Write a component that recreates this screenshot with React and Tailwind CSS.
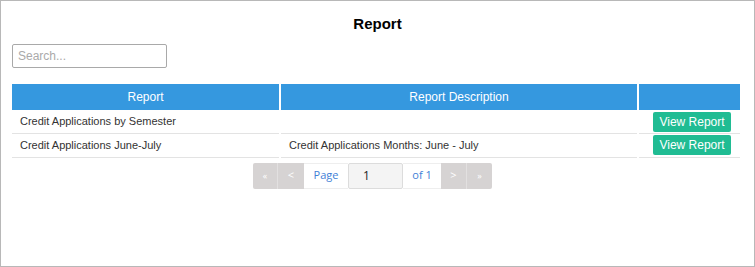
import React from "react";

const rows = [
  { name: "Credit Applications by Semester", desc: "" },
  { name: "Credit Applications June-July", desc: "Credit Applications Months: June - July" },
];

export default function App() {
  return (
    <div className="w-[755px] h-[267px] border border-[#b8b8b8] bg-white font-['Liberation_Sans',Arial,sans-serif] text-[#333]">
      {/* Title */}
      <h1 className="pt-[14px] h-[42px] text-center text-[15px] font-bold text-black leading-[17px]">
        Report
      </h1>

      {/* Search */}
      <div className="pl-[11px]">
        <input
          type="text"
          placeholder="Search..."
          className="w-[155px] h-[24px] border border-[#a9a9a9] rounded-[2px] px-[5px] text-[12px] placeholder:text-[#aaa] outline-none"
        />
      </div>

      {/* Table */}
      <table className="ml-[11px] mt-[16px] w-[728px] border-collapse text-[11px]">
        <thead>
          <tr className="h-[26px] bg-[#3598df] text-white text-[12px]">
            <th className="w-[268px] font-normal">Report</th>
            <th className="w-[358px] font-normal border-l-2 border-white">Report Description</th>
            <th className="font-normal border-l-2 border-white"></th>
          </tr>
        </thead>
        <tbody>
          {rows.map((r, i) => (
            <tr key={i} className="h-[23.5px]">
              <td className="pl-[8px] border-b border-[#e3e3e3]">{r.name}</td>
              <td className="pl-[8px] border-b border-l-2 border-b-[#e3e3e3] border-l-white">{r.desc}</td>
              <td className="border-b border-l-2 border-b-[#e3e3e3] border-l-white text-right pr-[9px]">
                <button className="w-[78px] h-[20px] bg-[#20bc93] text-white text-[12px] rounded-[2px] align-middle">
                  View Report
                </button>
              </td>
            </tr>
          ))}
        </tbody>
      </table>

      {/* Pagination */}
      <div className="flex justify-center mt-[5px] pr-[10px]">
        <div className="flex h-[26px] text-[11px] font-['Open_Sans',sans-serif]">
          <button className="w-[25px] bg-[#d6d3d3] text-white border-r border-[#e2e0e0] rounded-l-[2px] text-[9px]">«</button>
          <button className="w-[26px] bg-[#d6d3d3] text-white">&lt;</button>
          <span className="w-[44px] flex items-center justify-center text-[#3f7fd6] bg-white border-y border-[#eee]">Page</span>
          <div className="w-[55px] bg-[#f4f4f4] border border-[#dcdcdc] rounded-[2px] flex items-center pl-[14px] text-[12px] text-[#222]">1</div>
          <span className="w-[38px] flex items-center justify-center text-[#3f7fd6] bg-white border-y border-[#eee]">of 1</span>
          <button className="w-[26px] bg-[#d6d3d3] text-white border-r border-[#e2e0e0]">&gt;</button>
          <button className="w-[25px] bg-[#d6d3d3] text-white rounded-r-[2px] text-[9px]">»</button>
        </div>
      </div>
    </div>
  );
}
